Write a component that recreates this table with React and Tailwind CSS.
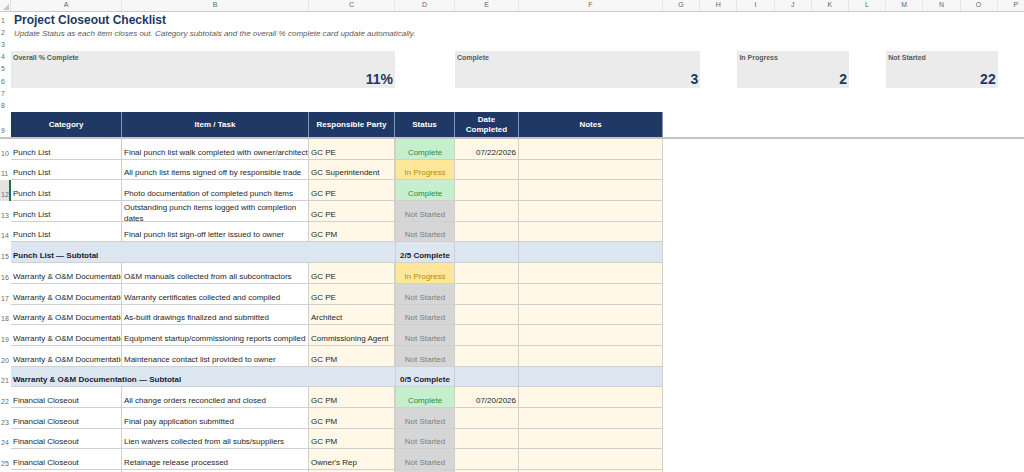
import React from 'react';

const COLS = "grid grid-cols-[11px_111px_187px_86px_60px_64px_144px_repeat(10,37.2px)]";
const letters = ["A", "B", "C", "D", "E", "F", "G", "H", "I", "J", "K", "L", "M", "N", "O", "P"];

const statusStyle = {
  "Complete": "bg-[#c6efce] text-[#2f8a3b]",
  "In Progress": "bg-[#ffe699] text-[#b8860b]",
  "Not Started": "bg-[#d6d6d6] text-[#7f7f7f]",
};

const rows = [
  { n: 10, cat: "Punch List", task: "Final punch list walk completed with owner/architect", party: "GC PE", status: "Complete", date: "07/22/2026" },
  { n: 11, cat: "Punch List", task: "All punch list items signed off by responsible trade", party: "GC Superintendent", status: "In Progress" },
  { n: 12, cat: "Punch List", task: "Photo documentation of completed punch items", party: "GC PE", status: "Complete", selected: true },
  { n: 13, cat: "Punch List", task: "Outstanding punch items logged with completion dates", party: "GC PE", status: "Not Started", wrap: true },
  { n: 14, cat: "Punch List", task: "Final punch list sign-off letter issued to owner", party: "GC PM", status: "Not Started" },
  { n: 15, subtotal: "Punch List — Subtotal", count: "2/5 Complete" },
  { n: 16, cat: "Warranty & O&M Documentation", task: "O&M manuals collected from all subcontractors", party: "GC PE", status: "In Progress" },
  { n: 17, cat: "Warranty & O&M Documentation", task: "Warranty certificates collected and compiled", party: "GC PE", status: "Not Started" },
  { n: 18, cat: "Warranty & O&M Documentation", task: "As-built drawings finalized and submitted", party: "Architect", status: "Not Started" },
  { n: 19, cat: "Warranty & O&M Documentation", task: "Equipment startup/commissioning reports compiled", party: "Commissioning Agent", status: "Not Started" },
  { n: 20, cat: "Warranty & O&M Documentation", task: "Maintenance contact list provided to owner", party: "GC PM", status: "Not Started" },
  { n: 21, subtotal: "Warranty & O&M Documentation — Subtotal", count: "0/5 Complete" },
  { n: 22, cat: "Financial Closeout", task: "All change orders reconciled and closed", party: "GC PM", status: "Complete", date: "07/20/2026" },
  { n: 23, cat: "Financial Closeout", task: "Final pay application submitted", party: "GC PM", status: "Not Started" },
  { n: 24, cat: "Financial Closeout", task: "Lien waivers collected from all subs/suppliers", party: "GC PM", status: "Not Started" },
  { n: 25, cat: "Financial Closeout", task: "Retainage release processed", party: "Owner's Rep", status: "Not Started" },
  { n: 26, cat: "Financial Closeout", task: "Final accounting reconciliation completed", party: "GC PM", status: "Not Started" },
];

const RowNum = ({ n, selected }) => (
  <div className={`flex items-end pl-[1px] pb-[2px] text-[7px] leading-[8px] text-[#6b6b6b] ${selected ? "bg-[#e3e3e3] border-r-2 border-[#217346]" : ""}`}>
    {n}
  </div>
);

const Card = ({ label, value, className }) => (
  <div className={`bg-[#ebebeb] flex flex-col justify-between px-[2px] pt-[3px] pb-[2px] ${className}`}>
    <div className="text-[7px] font-bold text-[#595959] leading-none">{label}</div>
    <div className="text-right text-[14px] font-bold text-[#1f3864] leading-none">{value}</div>
  </div>
);

const base = "border-r border-b border-[#d0d0d0] flex items-end px-[2px] overflow-hidden";
const cell = `${base} pb-[2px] leading-[9px] whitespace-nowrap`;

const DataRow = ({ r }) => {
  if (r.subtotal) {
    return (
      <div className={`${COLS} h-[20.7px]`}>
        <RowNum n={r.n} />
        <div className="col-span-3 bg-[#dce6f1] border-b border-[#d0d0d0] flex items-end px-[2px] pb-[2px] leading-[9px] font-bold text-[#1a1a2e] whitespace-nowrap">
          {r.subtotal}
        </div>
        <div className={`${cell} bg-[#dce6f1] justify-center font-bold text-[#1a1a2e] border-l`}>{r.count}</div>
        <div className={`${cell} bg-[#dce6f1]`}></div>
        <div className={`${cell} bg-[#dce6f1]`}></div>
      </div>
    );
  }
  return (
    <div className={`${COLS} h-[20.7px]`}>
      <RowNum n={r.n} selected={r.selected} />
      <div className={`${cell} bg-white`}>{r.cat}</div>
      {r.wrap ? (
        <div className={`${base} bg-white items-start pt-[1px] leading-[11px] whitespace-normal`}>{r.task}</div>
      ) : (
        <div className={`${cell} bg-white`}>{r.task}</div>
      )}
      <div className={`${cell} bg-[#fff8e6]`}>{r.party}</div>
      <div className={`${cell} justify-center border-l ${statusStyle[r.status]}`}>{r.status}</div>
      <div className={`${cell} bg-[#fff8e6] justify-end`}>{r.date}</div>
      <div className={`${cell} bg-[#fff8e6]`}></div>
    </div>
  );
};

export default function App() {
  return (
    <div className="w-[1024px] h-[472px] overflow-hidden bg-white font-['Liberation_Sans',Arial,sans-serif] text-[8px] text-[#262626]">
      <div className="w-[1035px]">
        {/* Column letters */}
        <div className={`${COLS} h-[12px] bg-[#f7f7f7] border-b border-[#c8c8c8]`}>
          <div className="relative border-r border-[#e0e0e0]">
            <div className="absolute right-[1px] bottom-[1px] w-0 h-0 border-l-[6px] border-l-transparent border-b-[6px] border-b-[#c4c4c4]"></div>
          </div>
          {letters.map((l) => (
            <div key={l} className="flex items-center justify-center text-[7px] text-[#666] border-r border-[#e6e6e6]">{l}</div>
          ))}
        </div>

        {/* Title rows */}
        <div className={`${COLS} h-[15px]`}>
          <RowNum n={1} />
          <div className="col-span-16 flex items-end pl-[3px] text-[12px] font-bold text-[#1f3864] leading-none pb-[1px]">Project Closeout Checklist</div>
        </div>
        <div className={`${COLS} h-[12px]`}>
          <RowNum n={2} />
          <div className="col-span-16 flex items-end pl-[3px] pb-[1px] leading-[9px] italic text-[8px] text-[#595959] whitespace-nowrap">
            Update Status as each item closes out. Category subtotals and the overall % complete card update automatically.
          </div>
        </div>
        <div className={`${COLS} h-[12px]`}>
          <RowNum n={3} />
        </div>

        {/* Summary cards */}
        <div className={`${COLS} grid-rows-[12px_12px_13px]`}>
          <div className="col-start-1 row-start-1 flex"><RowNum n={4} /></div>
          <div className="col-start-1 row-start-2 flex"><RowNum n={5} /></div>
          <div className="col-start-1 row-start-3 flex"><RowNum n={6} /></div>
          <Card label="Overall % Complete" value="11%" className="col-start-2 col-span-3 row-start-1 row-span-3" />
          <Card label="Complete" value="3" className="col-start-6 col-span-3 row-start-1 row-span-3" />
          <Card label="In Progress" value="2" className="col-start-10 col-span-3 row-start-1 row-span-3" />
          <Card label="Not Started" value="22" className="col-start-14 col-span-3 row-start-1 row-span-3" />
        </div>
        <div className={`${COLS} h-[12px]`}>
          <RowNum n={7} />
        </div>
        <div className={`${COLS} h-[12px]`}>
          <RowNum n={8} />
        </div>

        {/* Table header */}
        <div className={`${COLS} h-[27px] border-b-2 border-[#c4c4c4]`}>
          <RowNum n={9} />
          {["Category", "Item / Task", "Responsible Party", "Status", "Date Completed", "Notes"].map((h) => (
            <div key={h} className="bg-[#1f3864] text-white font-bold flex items-center justify-center text-center leading-[10px] border-r border-[#8497b0] px-[4px]">
              {h === "Date Completed" ? <span>Date<br />Completed</span> : h}
            </div>
          ))}
        </div>

        {rows.map((r) => (
          <DataRow key={r.n} r={r} />
        ))}
      </div>
    </div>
  );
}
